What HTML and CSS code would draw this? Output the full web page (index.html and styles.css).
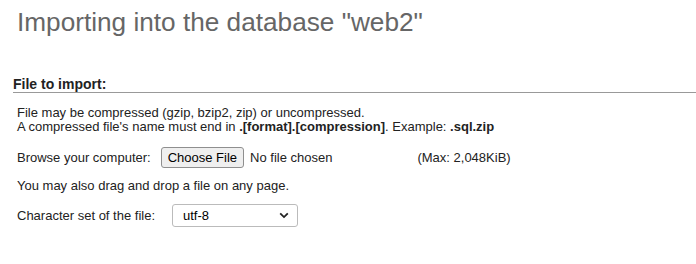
FILE: index.html
```html
<!DOCTYPE html>
<html>
<head>
<meta charset="utf-8">
<link rel="stylesheet" href="styles.css">
</head>
<body>
<div class="page">
  <h2 class="title">Importing into the database "web2"</h2>
  <fieldset class="import">
    <legend class="legend">File to import:</legend>
    <div class="note">
      <p>File may be compressed (gzip, bzip2, zip) or uncompressed.</p>
      <p>A compressed file's name must end in <b>.[format].[compression]</b>. Example: <b>.sql.zip</b></p>
    </div>
    <div class="row browse">
      <span class="label">Browse your computer:</span>
      <span class="filebtn">Choose File</span>
      <span class="nofile">No file chosen</span>
      <span class="max">(Max: 2,048KiB)</span>
    </div>
    <p class="drag">You may also drag and drop a file on any page.</p>
    <div class="row charset">
      <span class="label">Character set of the file:</span>
      <span class="select">utf-8
        <svg class="chev" width="10" height="7" viewBox="0 0 10 7"><path d="M1.2 1.3 L5 5.1 L8.8 1.3" fill="none" stroke="#222" stroke-width="1.8"/></svg>
      </span>
    </div>
  </fieldset>
</div>
</body>
</html>
```
FILE: styles.css
```css
html, body {
  margin: 0;
  padding: 0;
  background: #fff;
}
body {
  font-family: "Liberation Sans", Arial, sans-serif;
  font-size: 13px;
  color: #333;
}
.page {
  padding: 0 0 0 13px;
}
.title {
  margin: 0;
  padding: 6px 0 0 4px;
  font-weight: normal;
  font-size: 26.2px;
  line-height: 32px;
  color: #666;
}
.import {
  margin: 39px 0 0 0;
  padding: 0;
  border: none;
}
.legend {
  display: block;
  width: 100%;
  box-sizing: border-box;
  padding: 0;
  font-weight: bold;
  font-size: 14px;
  line-height: 15px;
  color: #222;
  border-bottom: 1px solid #999;
}
.note {
  margin: 13px 0 0 4px;
  color: #222;
}
.note p {
  margin: 0;
  line-height: 14px;
}
.row {
  display: flex;
  align-items: center;
  margin-left: 4px;
  color: #222;
}
.browse {
  margin-top: 13px;
}
.filebtn {
  margin-left: 10px;
  box-sizing: border-box;
  height: 21px;
  padding: 0 6px;
  border: 1px solid #8f8f8f;
  border-radius: 3px;
  background: #efefef;
  font-size: 13px;
  line-height: 19px;
  color: #000;
}
.nofile {
  margin-left: 6px;
  font-size: 13px;
  color: #222;
}
.max {
  margin-left: 85px;
}
.drag {
  margin: 10px 0 0 4px;
  line-height: 15px;
  color: #222;
}
.charset {
  margin-top: 11px;
}
.select {
  margin-left: 17px;
  box-sizing: border-box;
  width: 126px;
  height: 23px;
  padding: 0 8px 0 10px;
  border: 1px solid #bbb;
  border-radius: 3px;
  display: flex;
  align-items: center;
  justify-content: space-between;
  font-size: 13px;
  color: #000;
}
.chev {
  display: block;
}
```
